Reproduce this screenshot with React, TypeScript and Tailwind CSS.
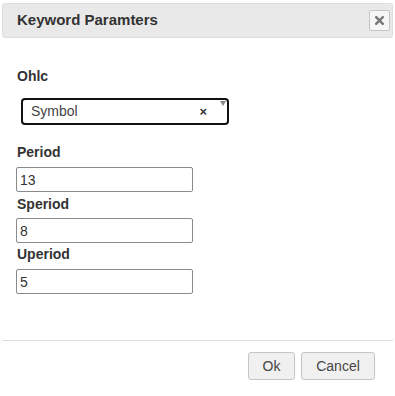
import React from "react"

const fields = [
  { label: "Period", value: "13" },
  { label: "Speriod", value: "8" },
  { label: "Uperiod", value: "5" },
]

export default function App() {
  return (
    <div className="w-[395px] h-[396px] bg-white text-[#333] font-['Liberation_Sans',Arial,sans-serif] overflow-hidden">
      {/* Title bar */}
      <div className="mt-[3px] mx-[2px] h-[35px] bg-[#e9e9e9] border border-[#dddddd] rounded-[3px] flex items-center justify-between pl-[14px] pr-[2px]">
        <span className="font-bold text-[15px] text-[#333]">Keyword Paramters</span>
        <button className="w-[21px] h-[21px] bg-[#f6f6f6] border border-[#c5c5c5] rounded-[2px] flex items-center justify-center">
          <svg width="9" height="9" viewBox="0 0 9 9">
            <path d="M1.2 1.2 L7.8 7.8 M7.8 1.2 L1.2 7.8" stroke="#777" strokeWidth="2.4" strokeLinecap="square" />
          </svg>
        </button>
      </div>

      <div className="pl-[16px]">
        <div className="mt-[30px] pl-px h-[16px] leading-[16px] font-bold text-[14px]">Ohlc</div>

        {/* Select */}
        <div className="relative mt-[14px] ml-[5px] w-[208px] h-[27px] border-2 border-[#111] rounded-[4px] flex items-center justify-between pl-[8px] pr-[20px]">
          <span className="text-[14px] text-[#444]">Symbol</span>
          <span className="text-[13px] font-bold text-[#333] leading-none">×</span>
          <div className="absolute right-[1px] top-[1px] w-0 h-0 border-l-[3px] border-r-[3px] border-t-[5px] border-l-transparent border-r-transparent border-t-[#888]" />
        </div>

        {fields.map((f, i) => (
          <div key={f.label}>
            <div
              className={
                (i === 0 ? "mt-[19px]" : i === 1 ? "mt-[4px]" : "mt-[3px]") +
                " pl-px h-[16px] leading-[16px] font-bold text-[14px]"
              }
            >
              {f.label}
            </div>
            <input
              readOnly
              value={f.value}
              className={
                (i === 1 ? "mt-[6px]" : "mt-[7px]") +
                " block w-[177px] h-[25px] border border-[#8a8a8a] rounded-[2px] px-[3px] text-[14px] text-[#333] outline-none"
              }
            />
          </div>
        ))}
      </div>

      <div className="mt-[46px] mx-[2px] h-px bg-[#dddddd]" />

      <div className="mt-[11px] flex justify-end gap-[6px] pr-[20px]">
        <button className="w-[47px] h-[28px] bg-[#f0f0f0] border border-[#c5c5c5] rounded-[3px] text-[14px] text-[#454545]">
          Ok
        </button>
        <button className="w-[74px] h-[28px] bg-[#f0f0f0] border border-[#c5c5c5] rounded-[3px] text-[14px] text-[#454545]">
          Cancel
        </button>
      </div>
    </div>
  )
}
